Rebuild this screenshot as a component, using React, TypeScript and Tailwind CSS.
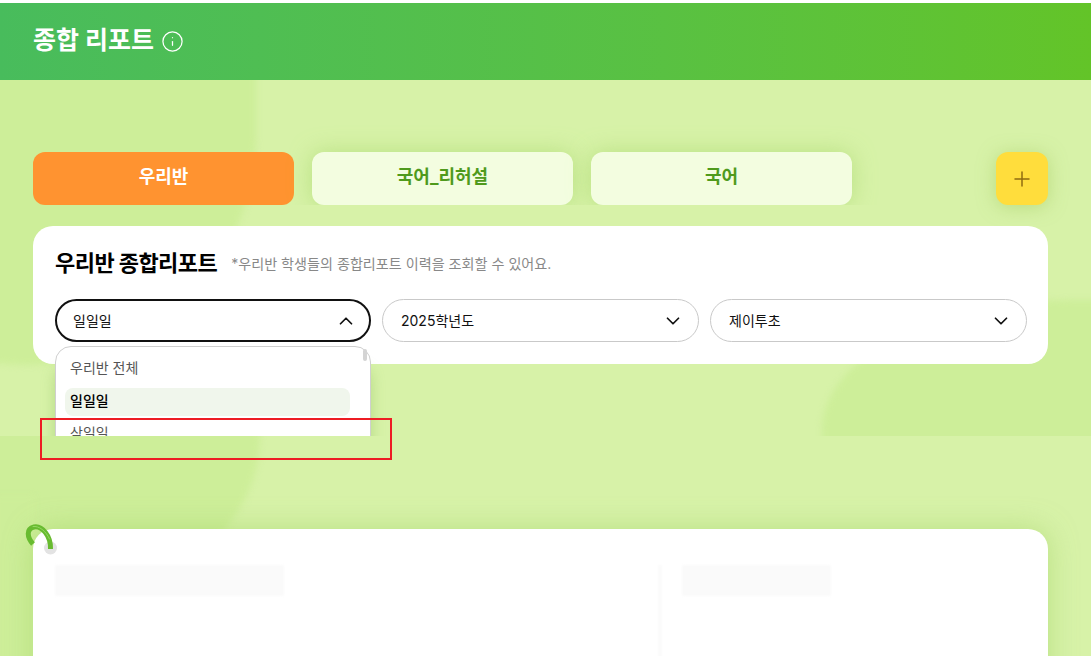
import { Info, ChevronDown, ChevronUp, Plus } from "lucide-react";

const font = "font-['Inter','Noto_Sans_CJK_KR','Liberation_Sans',sans-serif]";

const Select = ({ label, open = false, width }: { label: string; open?: boolean; width: string }) => (
  <div
    className={`flex h-[43px] shrink-0 items-center justify-between rounded-full bg-white text-[14px] text-[#111] ${width} ${
      open ? "border-2 border-[#111] pl-[16px] pr-[12px]" : "border border-[#c9c9c9] pl-[18px] pr-[14px]"
    }`}
  >
    <span className="mb-[1px]">{label}</span>
    {open ? <ChevronUp size={22} strokeWidth={1.9} /> : <ChevronDown size={22} strokeWidth={1.9} />}
  </div>
);

const Blob = ({ className }: { className: string }) => (
  <div className={`absolute bg-[#cdee99] blur-[3px] ${className}`} />
);

const Tab = ({ label, active = false }: { label: string; active?: boolean }) => (
  <button
    className={`h-[53px] w-[261px] rounded-[12px] pb-[4px] text-[18px] font-bold ${
      active
        ? "bg-[#ff9330] text-white"
        : "bg-[#f3fde0] text-[#4f9a1c] shadow-[0_0_22px_rgba(165,215,105,0.6)]"
    }`}
  >
    {label}
  </button>
);

export default function App() {
  return (
    <div className={`h-[656px] w-[1091px] overflow-hidden bg-white pt-[3px] ${font}`}>
      <header className="flex h-[77px] items-center gap-[9px] bg-gradient-to-r from-[#48bc5c] to-[#63c428] pl-[33px] text-white">
        <h1 className="mb-[3px] text-[25px] font-bold leading-none">종합 리포트</h1>
        <Info size={23} strokeWidth={1.3} className="mb-[1px] -ml-[2px]" />
      </header>

      <section className="relative h-[356px] overflow-hidden bg-[#d7f2a8] pl-[33px] pr-[43px] pt-[72px]">
        <Blob className="left-[-204px] top-[-245px] h-[530px] w-[460px] rounded-full" />
        <Blob className="left-[822px] top-[220px] h-[300px] w-[400px] rounded-tl-[250px_130px]" />

        <div className="relative flex h-[53px] items-end">
          <div className="-mt-[30px] flex gap-[18px] overflow-hidden pr-[30px] pt-[30px]">
            <Tab label="우리반" active />
            <Tab label="국어_리허설" />
            <Tab label="국어" />
          </div>
          <button className="ml-auto flex h-[53px] w-[52px] items-center justify-center rounded-[12px] bg-[#ffdd3c] text-[#8f6b10] shadow-[0_2px_18px_rgba(160,200,90,0.5)]">
            <Plus size={24} strokeWidth={1.5} />
          </button>
        </div>

        <div className="relative mt-[21px] h-[138px] rounded-[20px] bg-white px-[22px] pt-[21px]">
          <div className="flex h-[32px] items-center gap-[14px]">
            <h2 className="mb-[1px] text-[22px] font-bold leading-none tracking-[-0.025em] text-black">우리반 종합리포트</h2>
            <p className="mt-[3px] text-[14.1px] leading-none text-[#888]">
              *우리반 학생들의 종합리포트 이력을 조회할 수 있어요.
            </p>
          </div>
          <div className="mt-[20px] flex gap-[11px]">
            <Select label="일일일" open width="w-[316px]" />
            <Select label="2025학년도" width="w-[317px]" />
            <Select label="제이투초" width="w-[317px]" />
          </div>

          {/* dropdown list, cut off by the section below */}
          <div className="absolute left-[22px] top-[120px] h-[130px] w-[316px] rounded-[16px] border border-[#cfcfcf] bg-white px-[9px] pt-[7px] text-[14px] shadow-[0_20px_14px_rgba(130,180,80,0.4)]">
            <div className="absolute right-[3px] top-[2px] h-[12px] w-[4px] rounded-full bg-[#d4d4d4]" />
            <div className="flex h-[27px] items-center px-[5px] text-[#555]">우리반 전체</div>
            <div className="mt-[7px] flex h-[28px] w-[285px] items-center rounded-[8px] bg-[#f0f6ec] px-[5px] pb-[3px] font-medium text-black">
              일일일
            </div>
            <div className="mt-[3px] flex h-[27px] items-center px-[5px] text-[#555]">삼일일</div>
          </div>
        </div>
      </section>

      <section className="relative h-[220px] overflow-hidden bg-[#d7f2a8] pl-[33px] pr-[43px] pt-[93px]">
        <Blob className="left-[-220px] top-[-140px] h-[280px] w-[480px] rounded-full" />
        <Blob className="left-[-6px] top-[60px] h-[170px] w-[40px]" />
        <div className="relative flex h-[300px] rounded-[20px] bg-white shadow-[0_0_28px_rgba(160,210,100,0.55)]">
          <div className="ml-[22px] mt-[36px] h-[31px] w-[229px] rounded-[2px] bg-[#fafafa] blur-[1px]" />
          <div className="ml-[374px] mt-[36px] h-[300px] w-[4px] bg-[#fbfbfb] blur-[1px]" />
          <div className="ml-[20px] mt-[36px] h-[31px] w-[149px] rounded-[2px] bg-[#fafafa] blur-[1px]" />
        </div>
      </section>

      {/* binder ring on the lower card */}
      <svg className="absolute left-[24px] top-[522px]" width="36" height="36" viewBox="0 0 36 36" fill="none">
        <circle cx="26.5" cy="26" r="6.5" fill="#e3e3e3" />
        <path d="M9 22C3 15 2 7 10 5C18 3.5 27 14 26.5 27" stroke="#68bb30" strokeWidth="5" />
        <path d="M9 4.5C15 3.5 22 9 25.5 17" stroke="#93d862" strokeWidth="1" strokeLinecap="round" />
      </svg>

      {/* red annotation box from the capture */}
      <div className="absolute left-[40px] top-[418px] h-[42px] w-[352px] border-2 border-[#ed1c24]" />
    </div>
  );
}
